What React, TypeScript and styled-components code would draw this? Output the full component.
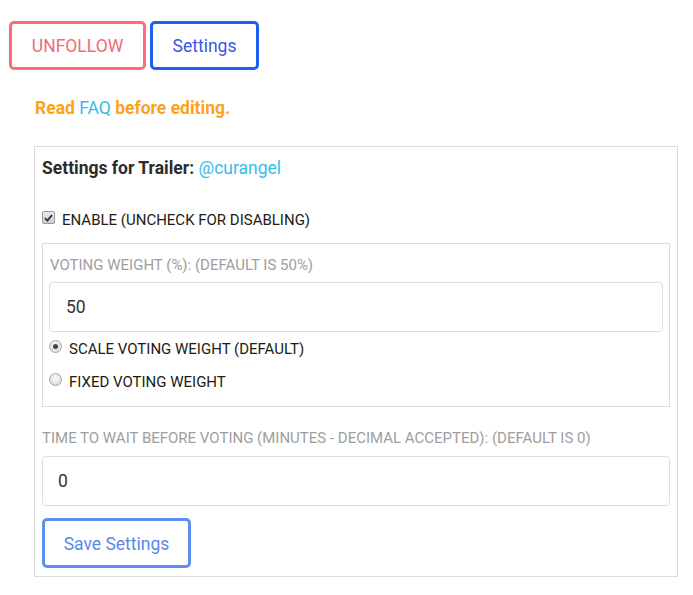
import React from "react";
import styled, { createGlobalStyle } from "styled-components";

const Global = createGlobalStyle`
  html, body { margin: 0; padding: 0; background: #fff; }
  body { font-family: Roboto, "Noto Sans", "Liberation Sans", sans-serif; color: #222; }
  * { box-sizing: border-box; }
`;

const Page = styled.div`
  padding: 21px 0 0 9px;
  width: 693px;
`;

const ButtonRow = styled.div`
  display: flex;
  gap: 4px;
`;

const OutlineButton = styled.button<{ $color: string; $text: string }>`
  height: 49px;
  padding: 1px 12px 0;
  border: 3px solid ${(p) => p.$color};
  border-radius: 5px;
  background: #fff;
  color: ${(p) => p.$text};
  font-family: Roboto, "Liberation Sans", sans-serif;
  font-size: 17.5px;
  cursor: pointer;
`;

const Notice = styled.p`
  margin: 26px 0 0 26px;
  font-size: 17.5px;
  line-height: 24px;
  font-weight: 700;
  color: #ffa21a;
`;

const Link = styled.a<{ $bold?: boolean }>`
  color: #34bdee;
  text-decoration: none;
  font-weight: ${(p) => (p.$bold ? 700 : 400)};
`;

const Box = styled.div`
  margin: 26px 0 0 25px;
  width: 644px;
  border: 1px solid #dcdcdc;
  padding: 8px 7px 8px 7px;
`;

const Title = styled.div`
  font-size: 17.5px;
  line-height: 26px;
  font-weight: 700;
  color: #2b2b2b;
`;

const CheckRow = styled.label<{ $top: number; $gap: number }>`
  display: flex;
  align-items: center;
  margin-top: ${(p) => p.$top}px;
  font-size: 15px;
  line-height: 20px;
  color: #221a14;
  gap: ${(p) => p.$gap}px;
`;

const CheckBox = styled.span`
  width: 13px;
  height: 13px;
  border: 1px solid #9a9a9a;
  border-radius: 2px;
  background: linear-gradient(#e8e8e8, #cfcfcf);
  display: inline-flex;
  align-items: center;
  justify-content: center;
  margin-top: -5px;
`;

const Radio = styled.span<{ $checked?: boolean }>`
  width: 13px;
  height: 13px;
  border: 1px solid #a6a6a6;
  border-radius: 50%;
  background: radial-gradient(circle at 50% 35%, #fafafa, #d4d4d4);
  display: inline-flex;
  align-items: center;
  justify-content: center;
  margin-top: -6px;
  &::after {
    content: "";
    display: ${(p) => (p.$checked ? "block" : "none")};
    width: 5px;
    height: 5px;
    border-radius: 50%;
    background: #444;
  }
`;

const Fieldset = styled.div`
  margin-top: 13px;
  border: 1px solid #dcdcdc;
  padding: 11px 6px 14px 6px;
`;

const FieldLabel = styled.div<{ $indent?: number }>`
  font-size: 15px;
  line-height: 20px;
  color: #9e9e9e;
  padding-left: ${(p) => p.$indent ?? 0}px;
`;

const TextInput = styled.input<{ $pad: number }>`
  display: block;
  width: 100%;
  height: 50px;
  margin-top: 7px;
  border: 1px solid #dedede;
  border-radius: 4px;
  padding: 0 ${(p) => p.$pad}px;
  font-family: Roboto, "Liberation Sans", sans-serif;
  font-size: 17.5px;
  color: #333;
  outline: none;
`;

const Spacer = styled.div<{ $h: number }>`
  height: ${(p) => p.$h}px;
`;

const SaveButton = styled(OutlineButton)`
  margin-top: 12px;
  width: 149px;
`;

export default function App() {
  return (
    <>
      <Global />
      <Page>
        <ButtonRow>
          <OutlineButton $color="#ff6b78" $text="#f36a76" style={{ width: 137 }}>
            UNFOLLOW
          </OutlineButton>
          <OutlineButton $color="#1f5ff0" $text="#3b55e6" style={{ width: 109 }}>
            Settings
          </OutlineButton>
        </ButtonRow>
        <Notice>
          Read <Link href="#">FAQ</Link> before editing.
        </Notice>
        <Box>
          <Title>
            Settings for Trailer: <Link href="#">@curangel</Link>
          </Title>
          <CheckRow $top={29} $gap={7}>
            <CheckBox>
              <svg width="9" height="8" viewBox="0 0 9 8">
                <path d="M1 4.2 L3.4 6.6 L8 1.2" fill="none" stroke="#333" strokeWidth="1.8" />
              </svg>
            </CheckBox>
            ENABLE (UNCHECK FOR DISABLING)
          </CheckRow>
          <Fieldset>
            <FieldLabel $indent={1}>VOTING WEIGHT (%): (DEFAULT IS 50%)</FieldLabel>
            <TextInput $pad={16} defaultValue="50" />
            <CheckRow $top={7} $gap={7}>
              <Radio $checked />
              SCALE VOTING WEIGHT (DEFAULT)
            </CheckRow>
            <CheckRow $top={13} $gap={7}>
              <Radio />
              FIXED VOTING WEIGHT
            </CheckRow>
          </Fieldset>
          <Spacer $h={21} />
          <FieldLabel>TIME TO WAIT BEFORE VOTING (MINUTES - DECIMAL ACCEPTED): (DEFAULT IS 0)</FieldLabel>
          <TextInput $pad={15} defaultValue="0" style={{ marginTop: 8 }} />
          <SaveButton $color="#5f8ff0" $text="#5a88ea" style={{ height: 50 }}>Save Settings</SaveButton>
        </Box>
      </Page>
    </>
  );
}
